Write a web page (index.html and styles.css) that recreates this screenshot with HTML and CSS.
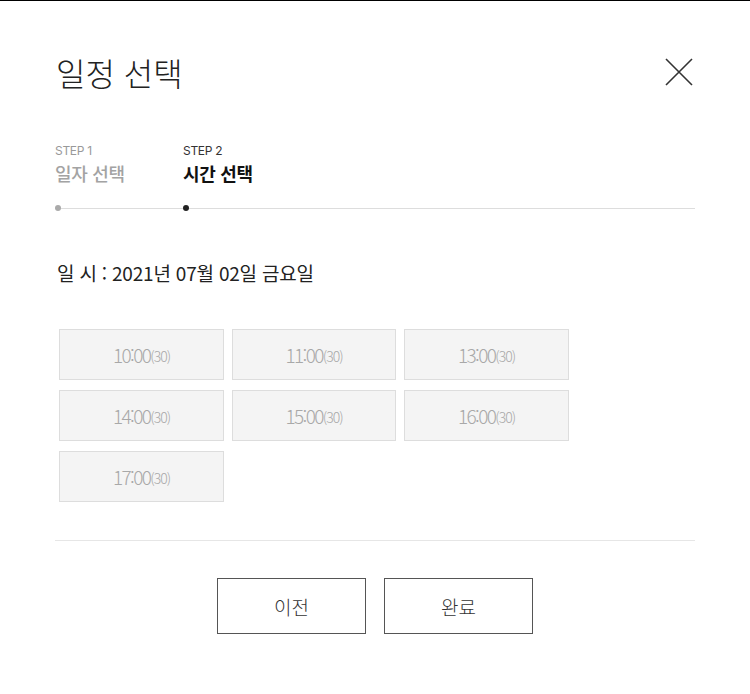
FILE: index.html
```html
<!DOCTYPE html>
<html lang="ko">
<head>
<meta charset="utf-8">
<link rel="stylesheet" href="styles.css">
</head>
<body>
<div class="modal">
  <div class="header">
    <h1 class="title">일정 선택</h1>
    <button class="close" aria-label="닫기">
      <svg width="28" height="28" viewBox="0 0 28 28"><path d="M1 1L27 27M27 1L1 27" stroke="#333" stroke-width="1.6" fill="none"/></svg>
    </button>
  </div>
  <div class="steps">
    <div class="step done">
      <div class="step-label">STEP 1</div>
      <div class="step-name">일자 선택</div>
    </div>
    <div class="step active">
      <div class="step-label">STEP 2</div>
      <div class="step-name">시간 선택</div>
    </div>
  </div>
  <div class="track">
    <span class="dot done"></span>
    <span class="dot active"></span>
  </div>
  <div class="date">일 시 : 2021년 07월 02일 금요일</div>
  <div class="times">
    <button class="time">10:00<small>(30)</small></button>
    <button class="time">11:00<small>(30)</small></button>
    <button class="time">13:00<small>(30)</small></button>
    <button class="time">14:00<small>(30)</small></button>
    <button class="time">15:00<small>(30)</small></button>
    <button class="time">16:00<small>(30)</small></button>
    <button class="time">17:00<small>(30)</small></button>
  </div>
  <hr class="sep">
  <div class="actions">
    <button class="btn">이전</button>
    <button class="btn">완료</button>
  </div>
</div>
</body>
</html>
```
FILE: styles.css
```css
* { box-sizing: border-box; }
html, body { margin: 0; padding: 0; background: #fff; }
body {
  font-family: "Noto Sans CJK KR", "Noto Sans", sans-serif;
  color: #222;
  border-top: 1px solid #000;
  height: 694px;
}
.modal { padding: 51px 55px 0 55px; }
.header {
  display: flex;
  justify-content: space-between;
  align-items: center;
  height: 40px;
}
.title {
  margin: 0 0 0 1px;
  font-size: 32px;
  font-weight: 300;
  line-height: 40px;
  letter-spacing: 0;
  color: #222;
}
.close {
  border: 0;
  background: none;
  padding: 0;
  width: 28px;
  height: 28px;
  margin-right: 2px;
  display: flex;
}
.steps {
  display: flex;
  margin-top: 51px;
}
.step { width: 128px; }
.step-label {
  font-family: "Inter", "Noto Sans", sans-serif;
  font-size: 12px;
  line-height: 16px;
  letter-spacing: -0.3px;
}
.step-name {
  margin-top: 2px;
  font-size: 18px;
  font-weight: 500;
  line-height: 24px;
  letter-spacing: -0.3px;
}
.step.done .step-label { color: #999; }
.step.done .step-name { color: #a3a3a3; }
.step.active .step-label { color: #333; }
.step.active .step-name { color: #111; font-weight: 700; }
.track {
  display: flex;
  align-items: center;
  gap: 122px;
  height: 6px;
  margin-top: 20px;
  background: linear-gradient(#ddd, #ddd) center / 100% 1px no-repeat;
}
.dot {
  width: 6px;
  height: 6px;
  border-radius: 50%;
}
.dot.done { background: #aaa; }
.dot.active { background: #222; }
.date {
  margin-top: 49px;
  margin-left: 2px;
  font-size: 19px;
  line-height: 26px;
  letter-spacing: -0.2px;
  color: #222;
}
.times {
  display: grid;
  grid-template-columns: 165px 164px 165px;
  grid-auto-rows: 51px;
  column-gap: 8px;
  row-gap: 10px;
  margin: 43px 0 0 4px;
}
.time {
  background: #f4f4f4;
  border: 1px solid #ddd;
  color: #a8a8a8;
  font-family: "Noto Sans CJK KR", "Noto Sans", sans-serif;
  font-size: 19px;
  font-weight: 300;
  letter-spacing: -1.6px;
  padding: 0;
  display: flex;
  align-items: center;
  justify-content: center;
}
.time small {
  font-size: 14px;
  letter-spacing: -1px;
  margin-top: 2px;
}
.sep {
  margin: 38px 0 0 0;
  border: 0;
  border-top: 1px solid #e6e6e6;
}
.actions {
  display: flex;
  justify-content: center;
  gap: 18px;
  margin-top: 37px;
}
.btn {
  width: 149px;
  height: 56px;
  border: 1px solid #555;
  background: #fff;
  color: #333;
  font-family: "Noto Sans CJK KR", "Noto Sans", sans-serif;
  font-size: 19px;
  font-weight: 300;
  padding: 0;
}
```
